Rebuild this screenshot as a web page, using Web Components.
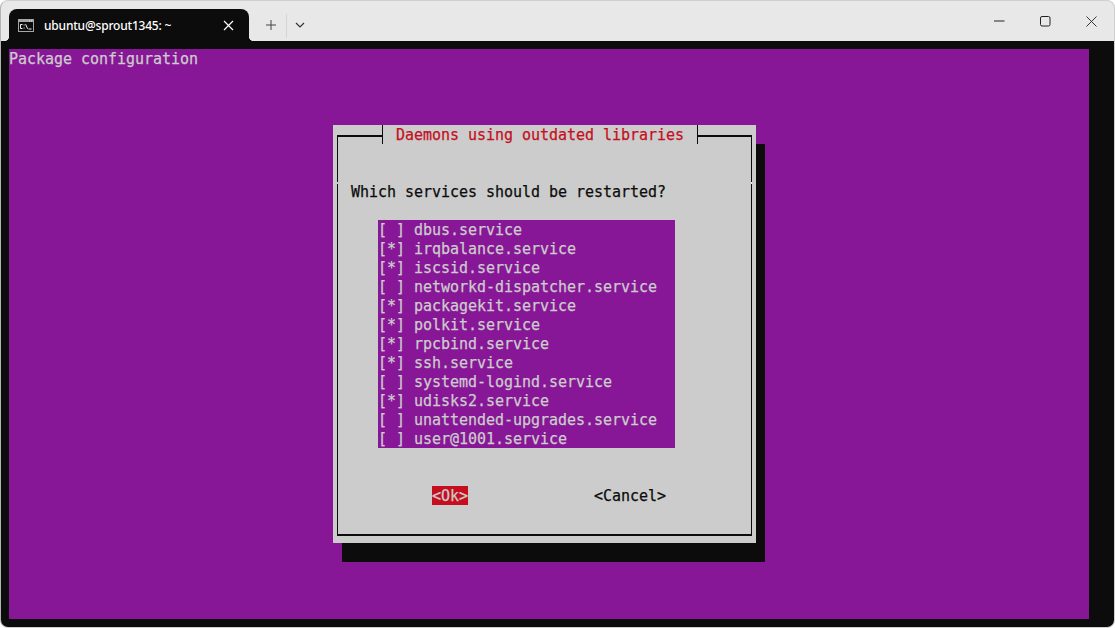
<!DOCTYPE html>
<html>
<head>
<meta charset="utf-8">
<title>ubuntu@sprout1345: ~</title>
<style>
    html, body { margin: 0; padding: 0; height: 100%; background: #fff; overflow: hidden; }
</style>
</head>
<body>
<terminal-window>
    <window-tab slot="tab" label="ubuntu@sprout1345: ~"></window-tab>
    <tui-screen title-text="Package configuration">
        <tui-dialog heading="Daemons using outdated libraries" question="Which services should be restarted?">
            <service-item>dbus.service</service-item>
            <service-item checked>irqbalance.service</service-item>
            <service-item checked>iscsid.service</service-item>
            <service-item>networkd-dispatcher.service</service-item>
            <service-item checked>packagekit.service</service-item>
            <service-item checked>polkit.service</service-item>
            <service-item checked>rpcbind.service</service-item>
            <service-item checked>ssh.service</service-item>
            <service-item>systemd-logind.service</service-item>
            <service-item checked>udisks2.service</service-item>
            <service-item>unattended-upgrades.service</service-item>
            <service-item>user@1001.service</service-item>
        </tui-dialog>
    </tui-screen>
</terminal-window>

<script>
const windowTemplate = document.createElement('template');
windowTemplate.innerHTML = `
    <style>
        :host {
            display: flex;
            flex-direction: column;
            height: 628px;
            width: 1115px;
            box-sizing: border-box;
            border-radius: 8px;
            overflow: hidden;
            background: #e8e8e8;
            border: 1px solid #cfcfcf;
            border-left-color: #b4b4b4;
        }
        .bar {
            height: 40px;
            flex: none;
            display: flex;
            align-items: flex-end;
            padding-left: 8px;
        }
        .new {
            width: 37px;
            height: 32px;
            padding-left: 6px;
            box-sizing: border-box;
            display: flex;
            align-items: center;
            justify-content: center;
        }
        .sep {
            width: 1px;
            height: 24px;
            background: #d4d4d4;
            margin-bottom: 3px;
        }
        .drop {
            width: 26px;
            height: 32px;
            display: flex;
            align-items: center;
            justify-content: center;
        }
        .caption {
            margin-left: auto;
            height: 40px;
            display: flex;
        }
        .caption span {
            width: 46px;
            display: flex;
            align-items: center;
            justify-content: center;
        }
        .body {
            flex: 1;
            background: #0c0c0c;
            padding: 8px 25px 8px 8px;
            min-height: 0;
        }
        svg { display: block; }
    </style>
    <div class="bar">
        <slot name="tab"></slot>
        <div class="new">
            <svg width="12" height="12" viewBox="0 0 12 12"><path d="M6 1v10M1 6h10" stroke="#444" stroke-width="1" fill="none"/></svg>
        </div>
        <div class="sep"></div>
        <div class="drop">
            <svg width="10" height="6" viewBox="0 0 10 6"><path d="M1 1l4 4 4-4" stroke="#333" stroke-width="1.2" fill="none"/></svg>
        </div>
        <div class="caption">
            <span><svg width="11" height="2" viewBox="0 0 11 2"><path d="M0 1h10.5" stroke="#222" stroke-width="1"/></svg></span>
            <span><svg width="11" height="11" viewBox="0 0 11 11"><rect x=".5" y=".5" width="9.5" height="9.5" rx="1.5" stroke="#222" stroke-width="1" fill="none"/></svg></span>
            <span><svg width="11" height="11" viewBox="0 0 11 11"><path d="M.5.5l10 10M10.5.5l-10 10" stroke="#222" stroke-width=".9" fill="none"/></svg></span>
        </div>
    </div>
    <div class="body"><slot></slot></div>`;

class TerminalWindow extends HTMLElement {
    constructor () {
        super();
        this.attachShadow({ mode: 'open' }).appendChild(windowTemplate.content.cloneNode(true));
    }
}

const tabTemplate = document.createElement('template');
tabTemplate.innerHTML = `
    <style>
        :host {
            display: flex;
            position: relative;
            align-items: center;
            width: 240px;
            height: 32px;
            box-sizing: border-box;
            padding-left: 9px;
            background: #0c0c0c;
            border-radius: 8px 8px 0 0;
            color: #fff;
            font: 500 12px "Noto Sans", "Open Sans", sans-serif;
            letter-spacing: -0.2px;
        }
        /* little flares where the tab meets the bar */
        :host::before, :host::after {
            content: '';
            position: absolute;
            bottom: 0;
            width: 4px;
            height: 4px;
        }
        :host::before { left: -4px; background: radial-gradient(circle at 0 0, transparent 3.6px, #0c0c0c 4.2px); }
        :host::after { right: -4px; background: radial-gradient(circle at 100% 0, transparent 3.6px, #0c0c0c 4.2px); }
        .label { margin-left: 10px; flex: 1; white-space: nowrap; }
        .close { margin-right: 15px; }
        svg { display: block; }
    </style>
    <svg width="16" height="13" viewBox="0 0 16 13">
        <rect x=".5" y=".5" width="15" height="12" fill="#0c0c0c" stroke="#a6a6a6"/>
        <rect x="1" y="1" width="14" height="2" fill="#a6a6a6"/>
        <path d="M11 2h1M13 2h1" stroke="#e8e8e8" stroke-width="1"/>
        <path d="M4.5 5.5H2.5v4h2M5.6 6h1M5.6 9h1M7.6 5.2l2 4.6M10.5 10h3" stroke="#f2f2f2" stroke-width="1" fill="none"/>
    </svg>
    <span class="label"></span>
    <svg class="close" width="11" height="11" viewBox="0 0 11 11"><path d="M1 1l9 9M10 1l-9 9" stroke="#fff" stroke-width="1.2" fill="none"/></svg>`;

class WindowTab extends HTMLElement {
    constructor () {
        super();
        this.attachShadow({ mode: 'open' }).appendChild(tabTemplate.content.cloneNode(true));
        this.shadowRoot.querySelector('.label').textContent = this.getAttribute('label');
    }
}

const screenTemplate = document.createElement('template');
screenTemplate.innerHTML = `
    <style>
        :host {
            display: grid;
            grid-template-columns: repeat(120, 9px);
            grid-template-rows: repeat(30, 19px);
            width: 1080px;
            height: 570px;
            background: #881798;
            color: #cccccc;
            font: 15px/21px "DejaVu Sans Mono", monospace;
            letter-spacing: -0.03px;
            -webkit-text-stroke: 0.25px currentColor;
        }
        .title { grid-column: 1 / 40; grid-row: 1; height: 19px; }
        ::slotted(tui-dialog) { grid-column: 37 / 84; grid-row: 5 / 27; }
    </style>
    <div class="title"></div>
    <slot></slot>`;

class TuiScreen extends HTMLElement {
    constructor () {
        super();
        this.attachShadow({ mode: 'open' }).appendChild(screenTemplate.content.cloneNode(true));
        this.shadowRoot.querySelector('.title').textContent = this.getAttribute('title-text');
    }
}

const dialogTemplate = document.createElement('template');
dialogTemplate.innerHTML = `
    <style>
        :host {
            display: flex;
            box-sizing: border-box;
            padding: 10px 4px 7px 4px;
            background: #cccccc;
            color: #0c0c0c;
            box-shadow: 9px 19px 0 #0c0c0c;
        }
        .frame {
            flex: 1;
            position: relative;
            border: 1px solid #0c0c0c;
            border-width: 2px 1px;
            display: flex;
            flex-direction: column;
        }
        .frame::before, .frame::after {
            content: '';
            position: absolute;
            top: 45px;
            width: 1px;
            height: 2px;
            background: #cccccc;
        }
        .frame::before { left: -1px; }
        .frame::after { right: -1px; background: #e6e6e6; }
        h1 {
            margin: -12px 0 0 44px;
            width: 316px;
            box-sizing: border-box;
            height: 19px;
            font: inherit;
            color: #c50f1f;
            background: #cccccc;
            border: 1px solid #0c0c0c;
            border-width: 0 1px;
            padding-left: 13px;
        }
        .question { margin: 38px 0 0 13px; height: 19px; }
        .list {
            margin: 19px 0 0 40px;
            width: 297px;
            background: #881798;
            color: #cccccc;
            display: flex;
            flex-direction: column;
        }
        .buttons { margin: 38px 0 0 94px; display: flex; gap: 126px; height: 19px; }
        .ok { display: block; width: 36px; height: 19px; background: #c50f1f; color: #cccccc; }
    </style>
    <div class="frame">
        <h1></h1>
        <div class="question"></div>
        <div class="list"><slot></slot></div>
        <div class="buttons">
            <span class="ok">&lt;Ok&gt;</span>
            <span>&lt;Cancel&gt;</span>
        </div>
    </div>`;

class TuiDialog extends HTMLElement {
    constructor () {
        super();
        this.attachShadow({ mode: 'open' }).appendChild(dialogTemplate.content.cloneNode(true));
        this.shadowRoot.querySelector('h1').textContent = this.getAttribute('heading');
        this.shadowRoot.querySelector('.question').textContent = this.getAttribute('question');
    }
}

const itemTemplate = document.createElement('template');
itemTemplate.innerHTML = `
    <style>
        :host { display: block; height: 19px; white-space: nowrap; }
        .mark { display: inline-block; width: 36px; white-space: pre; }
    </style>
    <span class="mark"></span><slot></slot>`;

class ServiceItem extends HTMLElement {
    constructor () {
        super();
        this.attachShadow({ mode: 'open' }).appendChild(itemTemplate.content.cloneNode(true));
        this.shadowRoot.querySelector('.mark').textContent = this.hasAttribute('checked') ? '[*]' : '[ ]';
    }
}

customElements.define('terminal-window', TerminalWindow);
customElements.define('window-tab', WindowTab);
customElements.define('tui-screen', TuiScreen);
customElements.define('tui-dialog', TuiDialog);
customElements.define('service-item', ServiceItem);
</script>
</body>
</html>
